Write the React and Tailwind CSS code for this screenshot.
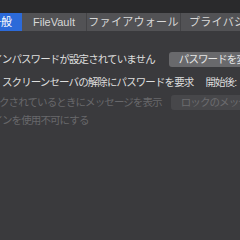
export default function App() {
  return (
    <div className="w-[240px] h-[240px] overflow-hidden bg-[#3a3a3d] font-['Liberation_Sans','Noto_Sans_CJK_JP',sans-serif] text-[#dedede]">
      {/* window top */}
      <div className="h-[13px] bg-[#2a2a2c]" />

      {/* tabs */}
      <div className="flex h-[18px] -ml-[20px] bg-[#525255] text-[11px] leading-[18px] text-[#d8d8d8]">
        <div className="w-[42px] shrink-0 bg-[#2c6ad9] text-center text-white">一般</div>
        <div className="w-[64px] shrink-0 text-center">FileVault</div>
        <div className="w-[94px] shrink-0 border-l border-[#434346] text-center tracking-[0.3px]">ファイアウォール</div>
        <div className="w-[90px] shrink-0 border-l border-[#434346] pl-[8px] tracking-[0.3px] whitespace-nowrap">プライバシー</div>
      </div>

      {/* content */}
      <div className="pt-[21px] text-[10.5px] tracking-[-0.9px] whitespace-nowrap">
        <div className="flex items-center h-[15px] -ml-[27px]">
          <span>ログインパスワードが設定されていません</span>
          <div className="ml-[14px] h-[15px] w-[90px] shrink-0 rounded-[3px] bg-[#69696c] pl-[10px] leading-[15px] text-[#e6e6e6]">
            パスワードを変更...
          </div>
        </div>

        <div className="flex items-center h-[16px] mt-[8px] -ml-[18px]">
          <div className="w-[14px] h-[14px] shrink-0 rounded-[3px] bg-[#5a5a5d]" />
          <span className="ml-[6px]">スクリーンセーバの解除にパスワードを要求</span>
          <span className="ml-[12px]">開始後:</span>
        </div>

        <div className="flex items-center h-[15px] mt-[4px] -ml-[49px] text-[#68686b]">
          <span>画面がロックされているときにメッセージを表示</span>
          <div className="ml-[9px] h-[15px] w-[100px] shrink-0 rounded-[3px] bg-[#47474a] pl-[10px] leading-[15px] text-[#6c6c6f]">
            ロックのメッセージを設定...
          </div>
        </div>

        <div className="flex items-center h-[14px] mt-[4px] -ml-[46px] text-[#68686b]">
          <span>自動ログインを使用不可にする</span>
        </div>
      </div>
    </div>
  );
}
